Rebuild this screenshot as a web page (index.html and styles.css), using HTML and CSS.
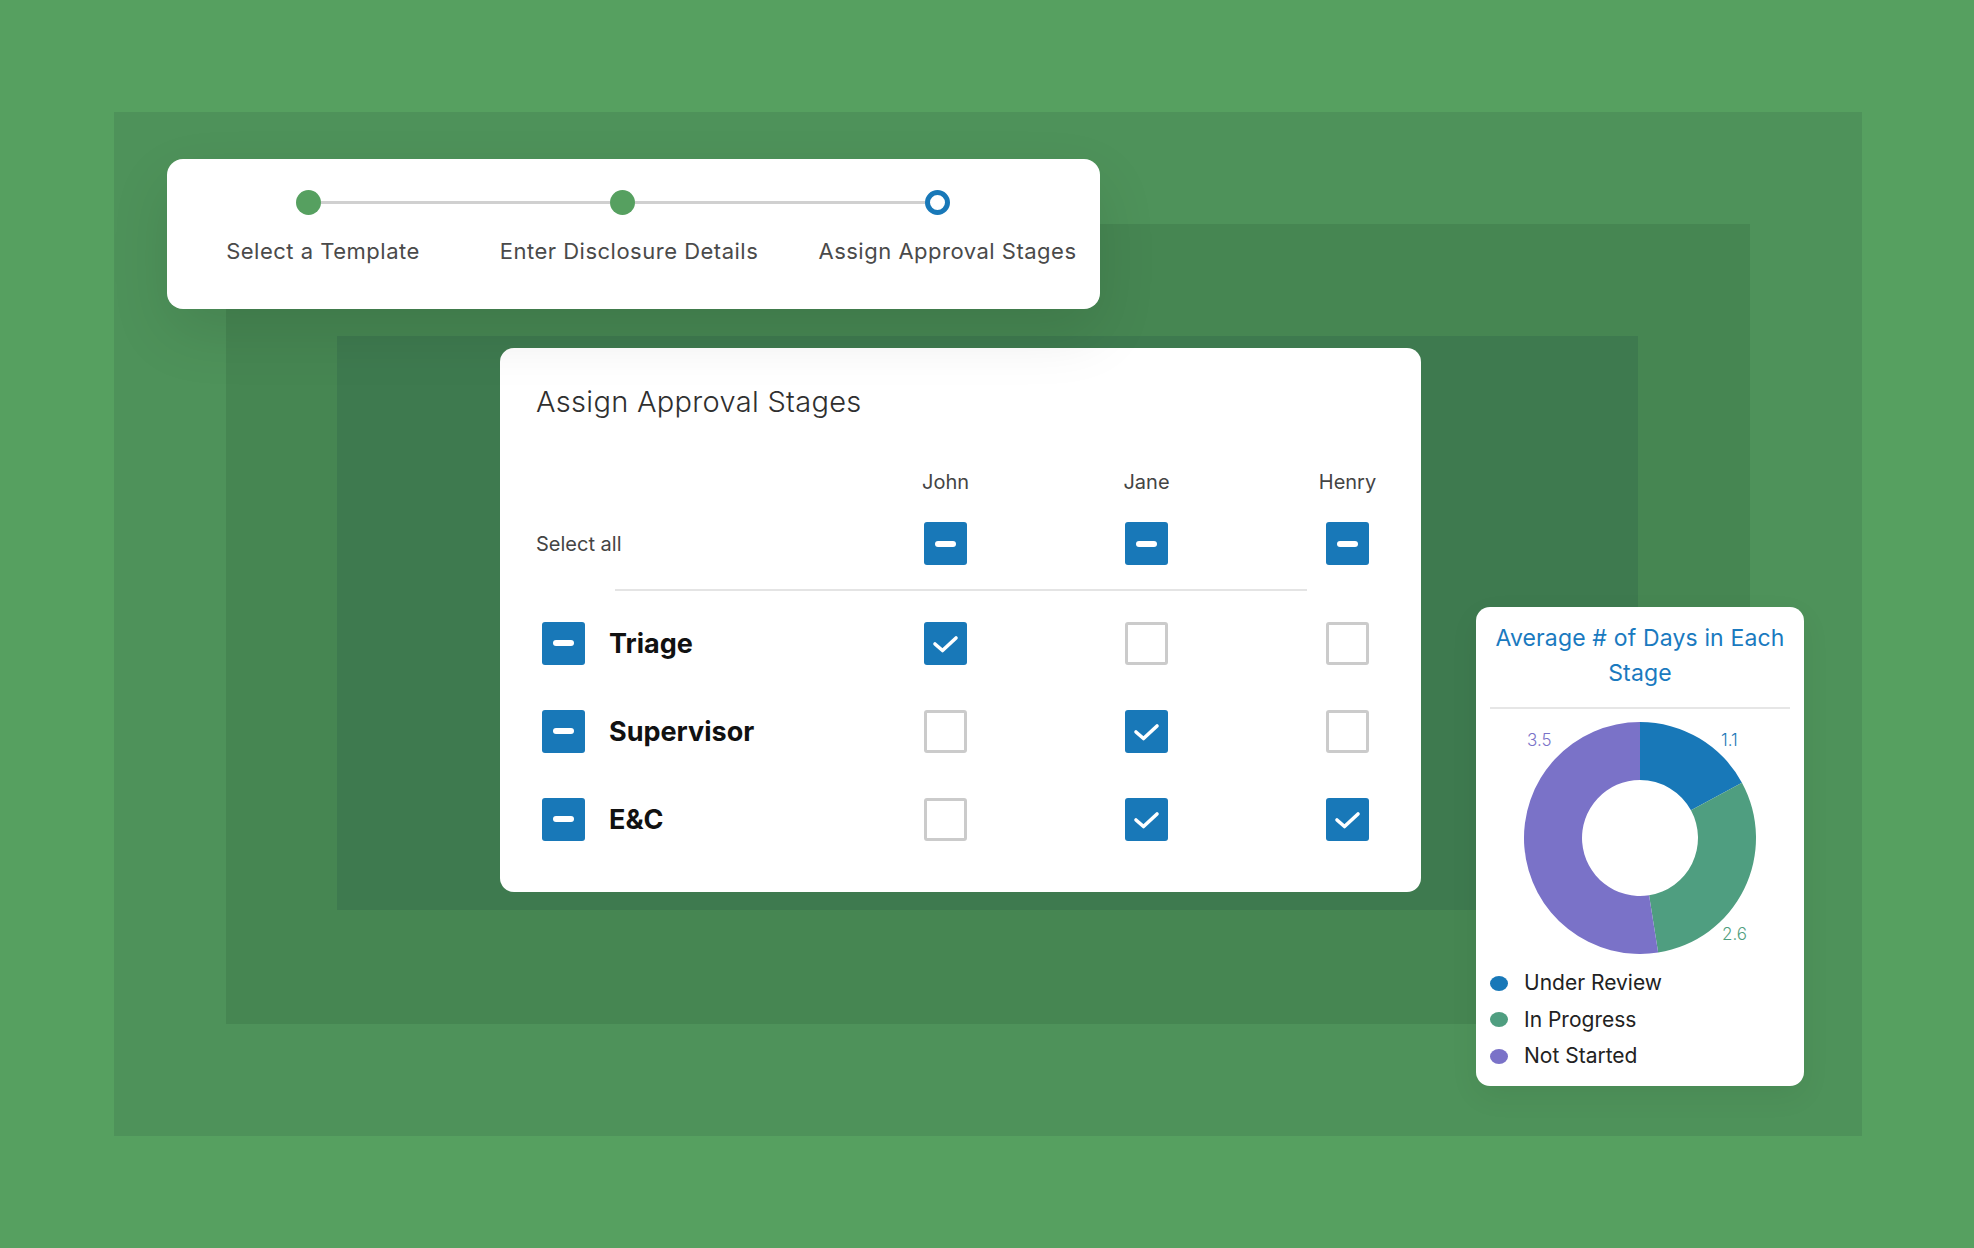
FILE: index.html
```html
<!DOCTYPE html>
<html lang="en">
<head>
<meta charset="utf-8">
<title>Assign Approval Stages</title>
<link rel="stylesheet" href="styles.css">
</head>
<body>
<div class="stage">
  <div class="band band1">
    <div class="band band2">
      <div class="band band3"></div>
    </div>
  </div>

  <section class="card steps">
    <div class="track">
      <span class="dot done"></span>
      <span class="link"></span>
      <span class="dot done"></span>
      <span class="link"></span>
      <span class="dot current"></span>
    </div>
    <div class="step-labels">
      <span>Select a Template</span>
      <span>Enter Disclosure Details</span>
      <span>Assign Approval Stages</span>
    </div>
  </section>

  <section class="card approvals">
    <h1 class="approvals-title">Assign Approval Stages</h1>
    <div class="grid head">
      <span></span>
      <span>John</span>
      <span>Jane</span>
      <span>Henry</span>
    </div>
    <div class="grid sel-row">
      <span class="sel-label">Select all</span>
      <span class="cb on"><i class="minus"></i></span>
      <span class="cb on"><i class="minus"></i></span>
      <span class="cb on"><i class="minus"></i></span>
    </div>
    <div class="divider"></div>
    <div class="grid stage-row first">
      <span class="stage-name"><span class="cb on"><i class="minus"></i></span>Triage</span>
      <span class="cb on"><svg viewBox="0 0 43 43"><polyline points="11,22 18.5,28.5 32,16"/></svg></span>
      <span class="cb"></span>
      <span class="cb"></span>
    </div>
    <div class="grid stage-row">
      <span class="stage-name"><span class="cb on"><i class="minus"></i></span>Supervisor</span>
      <span class="cb"></span>
      <span class="cb on"><svg viewBox="0 0 43 43"><polyline points="11,22 18.5,28.5 32,16"/></svg></span>
      <span class="cb"></span>
    </div>
    <div class="grid stage-row">
      <span class="stage-name"><span class="cb on"><i class="minus"></i></span>E&amp;C</span>
      <span class="cb"></span>
      <span class="cb on"><svg viewBox="0 0 43 43"><polyline points="11,22 18.5,28.5 32,16"/></svg></span>
      <span class="cb on"><svg viewBox="0 0 43 43"><polyline points="11,22 18.5,28.5 32,16"/></svg></span>
    </div>
  </section>

  <section class="card chart">
    <h2 class="chart-title">Average # of Days in Each Stage</h2>
    <div class="chart-divider"></div>
    <svg class="donut" width="300" height="232" viewBox="0 0 300 232">
      <path class="seg-blue" d="M150 0 A116 116 0 0 1 251.94 60.64 L200.97 88.32 A58 58 0 0 0 150 58 Z"/>
      <path class="seg-green" d="M251.94 60.64 A116 116 0 0 1 168.15 230.57 L159.07 173.29 A58 58 0 0 0 200.97 88.32 Z"/>
      <path class="seg-purple" d="M168.15 230.57 A116 116 0 1 1 150 0 L150 58 A58 58 0 1 0 159.07 173.29 Z"/>
      <text class="val val-purple" x="37" y="24">3.5</text>
      <text class="val val-blue" x="231" y="24">1.1</text>
      <text class="val val-green" x="232" y="218">2.6</text>
    </svg>
    <ul class="legend">
      <li><span class="ldot blue"></span>Under Review</li>
      <li><span class="ldot green"></span>In Progress</li>
      <li><span class="ldot purple"></span>Not Started</li>
    </ul>
  </section>
</div>
</body>
</html>
```

FILE: styles.css
```css
html, body {
  margin: 0;
  padding: 0;
}

body {
  background: #56a060;
  font-family: Inter, "Noto Sans", "Liberation Sans", sans-serif;
  color: #333;
}

.stage {
  position: relative;
  width: 1974px;
  height: 1248px;
  padding: 112px 0 0 114px;
  box-sizing: border-box;
  overflow: hidden;
}

.band {
  box-sizing: border-box;
}

.band1 {
  width: 1748px;
  height: 1024px;
  padding: 112px;
  background: #4e925a;
}

.band2 {
  width: 1524px;
  height: 800px;
  padding: 112px 112px 114px 111px;
  background: #468652;
}

.band3 {
  width: 1301px;
  height: 574px;
  background: #3e7a4f;
}

.card {
  position: absolute;
  background: #fff;
  box-sizing: border-box;
}

/* ---------- steps card ---------- */
.steps {
  left: 167px;
  top: 159px;
  width: 933px;
  height: 150px;
  border-radius: 16px;
  z-index: 3;
  box-shadow: 0 24px 60px rgba(0, 0, 0, 0.10);
}

.track {
  display: flex;
  align-items: center;
  margin: 31px 0 0 128.5px;
  width: 654px;
}

.dot {
  width: 25px;
  height: 25px;
  border-radius: 50%;
  box-sizing: border-box;
  flex: none;
}

.dot.done {
  background: #56a060;
}

.dot.current {
  background: #fff;
  border: 5px solid #1878b8;
}

.link {
  flex: 1;
  height: 3px;
  background: #d0d0d0;
}

.step-labels {
  display: grid;
  grid-template-columns: 312px 300px 337px;
  margin-top: 23px;
  font-size: 22px;
  line-height: 27px;
  letter-spacing: 0.5px;
  color: #4a4a4a;
  text-align: center;
  white-space: nowrap;
}

/* ---------- approvals card ---------- */
.approvals {
  left: 500px;
  top: 348px;
  width: 921px;
  height: 544px;
  border-radius: 14px;
  padding: 36px 33px 0 36px;
  z-index: 2;
}

.approvals-title {
  margin: 0;
  font-size: 29px;
  line-height: 36px;
  font-weight: 300;
  color: #2f2f2f;
  letter-spacing: 0.3px;
}

.grid {
  display: grid;
  grid-template-columns: 248.5px 80px 80px 80px;
  column-gap: 121px;
  align-items: center;
  justify-items: center;
}

.grid > :first-child {
  justify-self: start;
}

.head {
  margin-top: 50px;
  font-size: 20px;
  line-height: 24px;
  color: #444;
}

.sel-row {
  margin-top: 28px;
  height: 43px;
}

.sel-label {
  font-size: 20px;
  line-height: 24px;
  color: #444;
}

.divider {
  height: 2px;
  margin: 23.5px 81px 0 79px;
  background: #e4e4e4;
}

.stage-row {
  height: 43px;
  margin-top: 45px;
}

.stage-row.first {
  margin-top: 31px;
}

.stage-name {
  display: flex;
  align-items: center;
  gap: 24px;
  margin-left: 6px;
  font-size: 27px;
  font-weight: 700;
  color: #111;
  white-space: nowrap;
}

.cb {
  display: flex;
  align-items: center;
  justify-content: center;
  width: 43px;
  height: 43px;
  box-sizing: border-box;
  border: 3px solid #cbcbcb;
  border-radius: 3px;
  background: #fff;
  flex: none;
}

.cb.on {
  border: none;
  background: #1878b8;
}

.cb svg {
  width: 43px;
  height: 43px;
  display: block;
}

.cb polyline {
  fill: none;
  stroke: #fff;
  stroke-width: 3.6;
  stroke-linecap: round;
  stroke-linejoin: round;
}

.minus {
  display: block;
  width: 21px;
  height: 6px;
  border-radius: 3px;
  background: #fff;
}

/* ---------- chart card ---------- */
.chart {
  left: 1476px;
  top: 607px;
  width: 328px;
  height: 479px;
  border-radius: 14px;
  padding: 14px 14px 0;
  z-index: 2;
  box-shadow: 0 10px 30px rgba(0, 0, 0, 0.06);
}

.chart-title {
  margin: 0 -6px;
  font-size: 23px;
  line-height: 35px;
  font-weight: 400;
  letter-spacing: 0.15px;
  color: #1a7abf;
  text-align: center;
}

.chart-divider {
  height: 2px;
  margin-top: 16px;
  background: #e6e6e6;
}

.donut {
  display: block;
  margin-top: 13px;
}

.seg-blue { fill: #1878b8; }
.seg-green { fill: #4f9e80; }
.seg-purple { fill: #7a72c8; }

.val {
  font-family: Inter, "Noto Sans", sans-serif;
  font-size: 17px;
  font-weight: 300;
}

.val-blue { fill: #1878b8; }
.val-green { fill: #4f9e80; }
.val-purple { fill: #7a72c8; }

.legend {
  list-style: none;
  margin: 11px 0 0;
  padding: 0;
}

.legend li {
  display: flex;
  align-items: center;
  gap: 16px;
  font-size: 21px;
  line-height: 36.5px;
  color: #222;
}

.ldot {
  width: 18px;
  height: 15px;
  border-radius: 50%;
  flex: none;
}

.ldot.blue { background: #1878b8; }
.ldot.green { background: #4f9e80; }
.ldot.purple { background: #7a72c8; }
```
